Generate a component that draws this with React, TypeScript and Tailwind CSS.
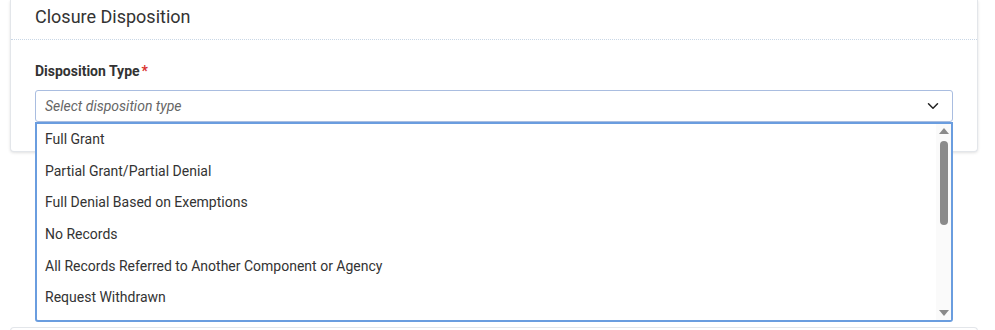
import { ChevronDown } from "lucide-react";

const options = [
  "Full Grant",
  "Partial Grant/Partial Denial",
  "Full Denial Based on Exemptions",
  "No Records",
  "All Records Referred to Another Component or Agency",
  "Request Withdrawn",
];

export default function App() {
  return (
    <div className="w-[995px] h-[330px] bg-white overflow-hidden font-['Roboto',sans-serif] text-[#333]">
      <div className="ml-[10px] w-[968px] bg-white border-x border-b border-[#e3e6ea] rounded-b shadow-[0_1px_3px_rgba(0,0,0,0.12)]">
        <div className="h-[40px] px-[24px] flex items-center border-b border-dotted border-[#c9d7e6]">
          <h2 className="text-[18px] leading-none -mt-[5px]">Closure Disposition</h2>
        </div>
        <div className="px-[24px] pt-[22px] pb-[29px]">
          <label className="block text-[14px] font-bold leading-[18px] mb-[10px]">
            Disposition Type<span className="text-[#d9302c] ml-[2px]">*</span>
          </label>
          <div className="relative">
            <div className="h-[32px] border border-[#a9bde0] rounded-[3px] flex items-center justify-between pl-[9px] pr-[10px]">
              <span className="italic text-[14px] text-[#666]">Select disposition type</span>
              <ChevronDown className="w-[18px] h-[18px] text-[#222]" strokeWidth={2} />
            </div>
            <div className="absolute left-0 right-0 top-[32px] h-[200px] bg-white border-2 border-[#6a9ddf] rounded-b-[3px] flex">
              <ul className="flex-1">
                {options.map((o) => (
                  <li key={o} className="h-[31.6px] flex items-center pl-[8px] text-[14px] text-[#333]">
                    {o}
                  </li>
                ))}
              </ul>
              <div className="w-[15px] flex flex-col items-center bg-[#fafafa]">
                <div className="h-[14px] flex items-center justify-center">
                  <div className="w-0 h-0 border-x-[5px] border-x-transparent border-b-[6px] border-b-[#8a8a8a]" />
                </div>
                <div className="mt-[3px] w-[8px] h-[84px] rounded-full bg-[#8a8a8a]" />
                <div className="flex-1" />
                <div className="h-[14px] flex items-center justify-center">
                  <div className="w-0 h-0 border-x-[5px] border-x-transparent border-t-[6px] border-t-[#8a8a8a]" />
                </div>
              </div>
            </div>
          </div>
        </div>
      </div>
      <div className="ml-[10px] w-[968px] mt-[175px] h-[20px] border-t border-x border-[#e3e6ea] rounded-t" />
    </div>
  );
}
